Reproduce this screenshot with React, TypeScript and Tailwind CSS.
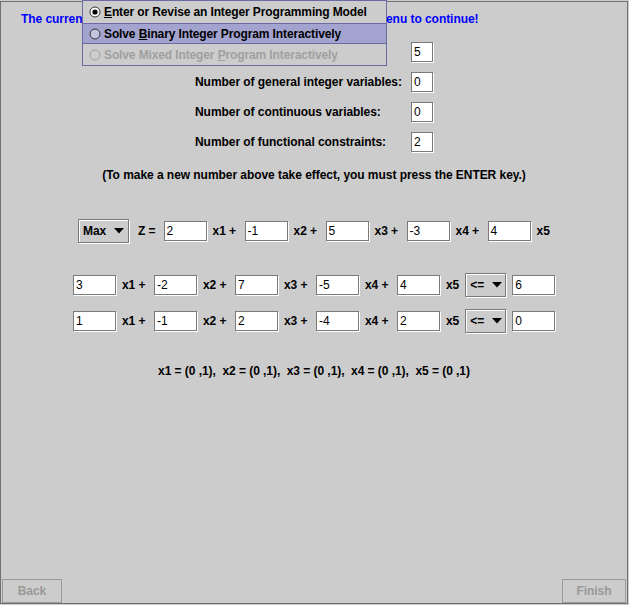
import React from "react";

function Field({ v, w = "w-[43px]" }: { v: string; w?: string }) {
  return (
    <div
      className={`${w} h-[20px] bg-white border border-[#7a7a7a] shadow-[1px_1px_0_#ffffff] text-[12px] leading-[18px] pl-[2px] font-normal text-black shrink-0 tracking-normal`}
    >
      {v}
    </div>
  );
}

function Tri() {
  return (
    <svg width="10" height="6" viewBox="0 0 10 6" className="shrink-0">
      <polygon points="0,0 10,0 5,5.5" fill="#000" />
    </svg>
  );
}

function Combo({ label, w }: { label: string; w: string }) {
  return (
    <div
      className={`${w} h-[24px] border border-[#7a7a7a] shadow-[inset_1px_1px_0_#ffffff,1px_1px_0_#ffffff] flex items-center pl-[4px] gap-[8px] shrink-0`}
    >
      <span>{label}</span>
      <Tri />
    </div>
  );
}

function Radio({ kind }: { kind: "on" | "off" | "dis" }) {
  const stroke = kind === "dis" ? "#a0a0a0" : "#333333";
  const fill = kind === "on" ? "#ffffff" : kind === "off" ? "#c4c4e0" : "none";
  return (
    <svg width="12" height="12" viewBox="0 0 12 12" className="shrink-0">
      <circle cx="6" cy="6" r="5" stroke={stroke} strokeWidth="1" fill={fill} />
      {kind === "on" && <circle cx="6" cy="6" r="2.6" fill="#000" />}
    </svg>
  );
}

function Term({ v, label, last }: { v: string; label: string; last?: boolean }) {
  return (
    <>
      <Field v={v} />
      <span className={`ml-[6px] ${last ? "" : "w-[32px]"} shrink-0 whitespace-nowrap`}>{label}</span>
    </>
  );
}

export default function App() {
  const labels = [
    ["Number of binary variables:", "5"],
    ["Number of general integer variables:", "0"],
    ["Number of continuous variables:", "0"],
    ["Number of functional constraints:", "2"],
  ];
  return (
    <div className="w-[629px] h-[605px] bg-[#cccccc] relative font-['Liberation_Sans',Arial,sans-serif] text-[12px] font-bold text-black overflow-hidden pt-[1px] pr-[1px] pb-[1px] tracking-[-0.05px]">
      <div className="h-full border border-[#707070] flex flex-col">
        <div className="mt-[10px] pl-[20px] leading-[14px] text-[#0000ff] whitespace-nowrap">
          <span className="inline-block w-[365px] overflow-hidden whitespace-nowrap align-top">
            The current procedure is finished. Please go to the Procedure m
          </span>
          <span>enu to continue!</span>
        </div>

        <div className="mt-[16px] ml-[194px] grid grid-cols-[216px_22px] gap-y-[10px] items-center">
          {labels.map(([l, v]) => (
            <React.Fragment key={l}>
              <span className="leading-[20px] whitespace-nowrap">{l}</span>
              <Field v={v} w="w-[22px]" />
            </React.Fragment>
          ))}
        </div>

        <div className="mt-[16px] leading-[14px] text-center whitespace-nowrap">
          (To make a new number above take effect, you must press the ENTER key.)
        </div>

        <div className="mt-[37px] pl-[77px] flex items-center h-[24px]">
          <Combo label="Max" w="w-[51px]" />
          <span className="ml-[9px] mr-[8px] whitespace-nowrap">Z =</span>
          <Term v="2" label="x1 +" />
          <Term v="-1" label="x2 +" />
          <Term v="5" label="x3 +" />
          <Term v="-3" label="x4 +" />
          <Term v="4" label="x5" last />
        </div>

        {[
          ["3", "-2", "7", "-5", "4", "6"],
          ["1", "-1", "2", "-4", "2", "0"],
        ].map((r, i) => (
          <div key={i} className={`${i === 0 ? "mt-[30px]" : "mt-[12px]"} pl-[72px] flex items-center h-[24px]`}>
            <Term v={r[0]} label="x1 +" />
            <Term v={r[1]} label="x2 +" />
            <Term v={r[2]} label="x3 +" />
            <Term v={r[3]} label="x4 +" />
            <Term v={r[4]} label="x5" last />
            <div className="ml-[6px]">
              <Combo label="<=" w="w-[41px]" />
            </div>
            <div className="ml-[6px]">
              <Field v={r[5]} />
            </div>
          </div>
        ))}

        <div className="mt-[31px] leading-[14px] text-center whitespace-pre">
          {"x1 = (0 ,1),  x2 = (0 ,1),  x3 = (0 ,1),  x4 = (0 ,1),  x5 = (0 ,1)"}
        </div>

        <div className="mt-auto flex justify-between pl-[1px] pr-[1px]">
          <div className="w-[60px] h-[24px] border border-[#999999] text-[#999999] flex items-center justify-center">
            Back
          </div>
          <div className="w-[64px] h-[24px] border border-[#999999] text-[#999999] flex items-center justify-center">
            Finish
          </div>
        </div>
      </div>

      <div className="absolute left-[82px] top-0 w-[305px] h-[66px] border border-[#6b6ba3] bg-[#cccccc] flex flex-col tracking-[-0.12px]">
        <div className="h-[22px] flex items-center pl-[6px] gap-[3px] whitespace-nowrap">
          <Radio kind="on" />
          <span>
            <span className="underline">E</span>nter or Revise an Integer Programming Model
          </span>
        </div>
        <div className="h-[21px] bg-[#a3a3cf] border-y border-[#6b6ba3] flex items-center pl-[6px] gap-[3px] whitespace-nowrap">
          <Radio kind="off" />
          <span>
            Solve <span className="underline">B</span>inary Integer Program Interactively
          </span>
        </div>
        <div className="h-[21px] flex items-center pl-[6px] gap-[3px] whitespace-nowrap text-[#a0a0a0]">
          <Radio kind="dis" />
          <span>
            Solve Mixed Integer <span className="underline">P</span>rogram Interactively
          </span>
        </div>
      </div>
    </div>
  );
}
